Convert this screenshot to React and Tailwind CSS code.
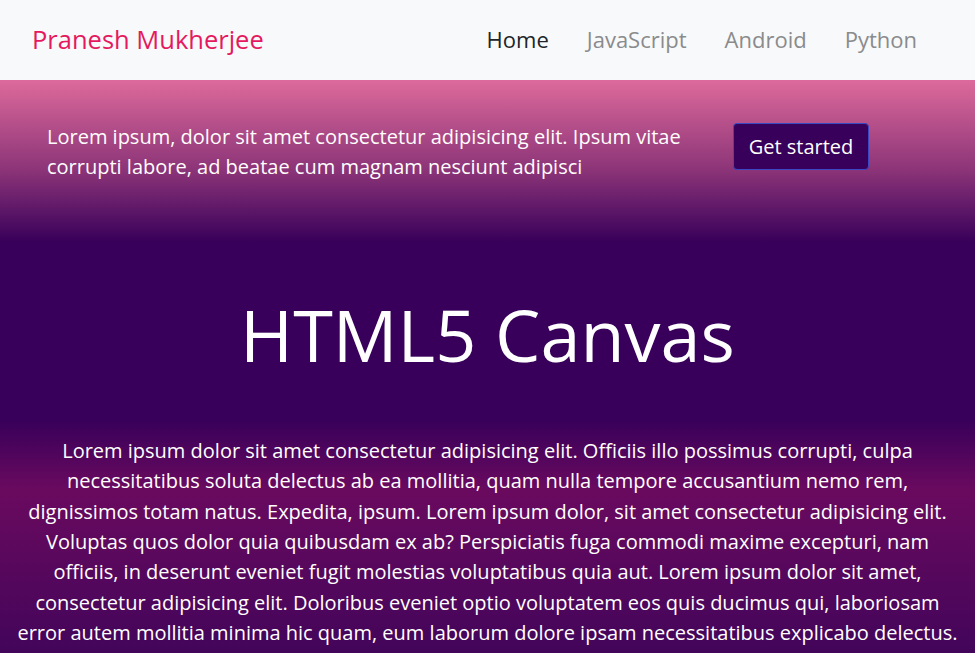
export default function App(){
  const links = ["Home", "JavaScript", "Android", "Python"];
  return (
    <div className="min-h-screen font-['Open_Sans',sans-serif]">
      <nav className="h-20 bg-[#f8f9fa] flex items-center justify-between pl-8 pr-[58px]">
        <a className="text-[25.5px] text-[#e5195f] -mt-[2px]" href="#">Pranesh Mukherjee</a>
        <ul className="flex items-center gap-[38px] text-[22px] -mt-[2px]">
          {links.map((l, i) => (
            <li key={l}>
              <a href="#" className={i === 0 ? "text-[#212529]" : "text-[#8a8b8d]"}>{l}</a>
            </li>
          ))}
        </ul>
      </nav>

      <main className="bg-[linear-gradient(180deg,#dd6a9b_0px,#8c3478_90px,#38005a_162px,#38005a_340px,#6a0a5f_410px,#42055a_573px)] text-white">
        <section className="flex items-start pl-[47px] pt-[42px]">
          <p className="w-[652px] text-xl leading-[30px]">
            Lorem ipsum, dolor sit amet consectetur adipisicing elit. Ipsum vitae corrupti labore, ad beatae cum magnam nesciunt adipisci
          </p>
          <button className="ml-[34px] mt-[1px] h-[47px] w-[136px] rounded bg-[#38005a] border border-[#3949c6] text-xl text-white">
            Get started
          </button>
        </section>

        <h1 className="mt-[113px] text-center text-[72px] leading-[1.1]">HTML5 Canvas</h1>

        <p className="mt-[62px] px-4 text-center text-xl leading-[30.3px]">
          Lorem ipsum dolor sit amet consectetur adipisicing elit. Officiis illo possimus corrupti, culpa necessitatibus soluta delectus ab ea mollitia, quam nulla tempore accusantium nemo rem, dignissimos totam natus. Expedita, ipsum. Lorem ipsum dolor, sit amet consectetur adipisicing elit. Voluptas quos dolor quia quibusdam ex ab? Perspiciatis fuga commodi maxime excepturi, nam officiis, in deserunt eveniet fugit molestias voluptatibus quia aut. Lorem ipsum dolor sit amet, consectetur adipisicing elit. Doloribus eveniet optio voluptatem eos quis ducimus qui, laboriosam error autem mollitia minima hic quam, eum laborum dolore ipsam necessitatibus explicabo delectus.
        </p>
        <div className="h-10" />
      </main>
    </div>
  );
}
